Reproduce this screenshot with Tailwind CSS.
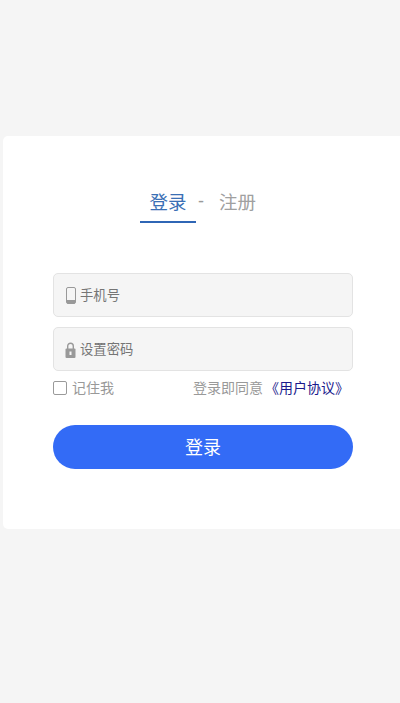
<!doctype html>
<html lang="zh">
<head>
<meta charset="utf-8">
<script src="https://cdn.jsdelivr.net/npm/@tailwindcss/browser@4"></script>
</head>
<body class="m-0 h-[703px] w-[400px] overflow-hidden bg-[#f5f5f5] font-['Liberation_Sans','Noto_Sans_CJK_SC',sans-serif]">
<main class="pt-[136px] pl-[3px]">
  <section class="h-[393px] w-[397px] rounded-l-[5px] bg-white pt-[50px] pl-[50px]">
    <div class="flex h-[37px] w-[300px] items-start pl-[87px]">
      <div class="flex h-[37px] w-[56px] justify-center border-b-2 border-[#2f66b5] pt-[5px] text-[18.5px] leading-[24px] text-[#3a6fb5]">登录</div>
      <span class="ml-[2px] w-[7px] pt-[3px] text-lg leading-[24px] text-[#999]">-</span>
      <div class="ml-[14px] pt-[5px] text-[18.5px] leading-[24px] text-[#a0a0a0]">注册</div>
    </div>
    <form class="mt-[50px] w-[300px]">
      <div class="flex h-[44px] items-center rounded-[5px] border border-[#e3e3e3] bg-[#f5f5f5] pl-[12px]">
        <svg class="mt-[1px] h-[17px] w-[10px] shrink-0" viewBox="0 0 10 17" fill="none" aria-hidden="true">
          <rect x="0.5" y="0.5" width="9" height="16" rx="1.5" stroke="#999" stroke-width="1"/>
          <rect x="1" y="13" width="8" height="3.5" fill="#999"/>
        </svg>
        <input type="text" placeholder="手机号" class="ml-[4px] mt-[2px] w-[240px] bg-transparent text-[13.33px] outline-none placeholder:text-[#757575]">
      </div>
      <div class="mt-[10px] flex h-[44px] items-center rounded-[5px] border border-[#e3e3e3] bg-[#f5f5f5] pl-[11px]">
        <svg class="mt-[2px] h-[16px] w-[11px] shrink-0" viewBox="0 0 11 16" fill="none" aria-hidden="true">
          <path d="M2.7 7V4a2.8 2.8 0 0 1 5.6 0V7" stroke="#999" stroke-width="1.4"/>
          <rect x="0.5" y="6.5" width="10" height="9.5" rx="1" fill="#999"/>
          <rect x="4.5" y="9.5" width="2" height="3.5" fill="#f5f5f5"/>
        </svg>
        <input type="password" placeholder="设置密码" class="ml-[4px] mt-[2px] w-[240px] bg-transparent text-[13.33px] outline-none placeholder:text-[#757575]">
      </div>
      <div class="mt-[8px] flex h-[18px] items-center justify-between text-sm leading-[18px]">
        <label class="flex items-center text-[#999]">
          <span class="h-[14px] w-[14px] rounded-[2px] border border-[#9a9a9a] bg-white"></span>
          <span class="ml-[5px]">记住我</span>
        </label>
        <div class="mr-[4px] text-[#999]">登录即同意 <a class="ml-[-2px] text-[#1a1a8c]">《用户协议》</a></div>
      </div>
      <button type="button" class="mt-[28px] flex h-[44px] w-[300px] items-center justify-center rounded-[22px] bg-[#336bf6] pt-[1px] text-lg text-white">登录</button>
    </form>
  </section>
</main>
</body>
</html>
